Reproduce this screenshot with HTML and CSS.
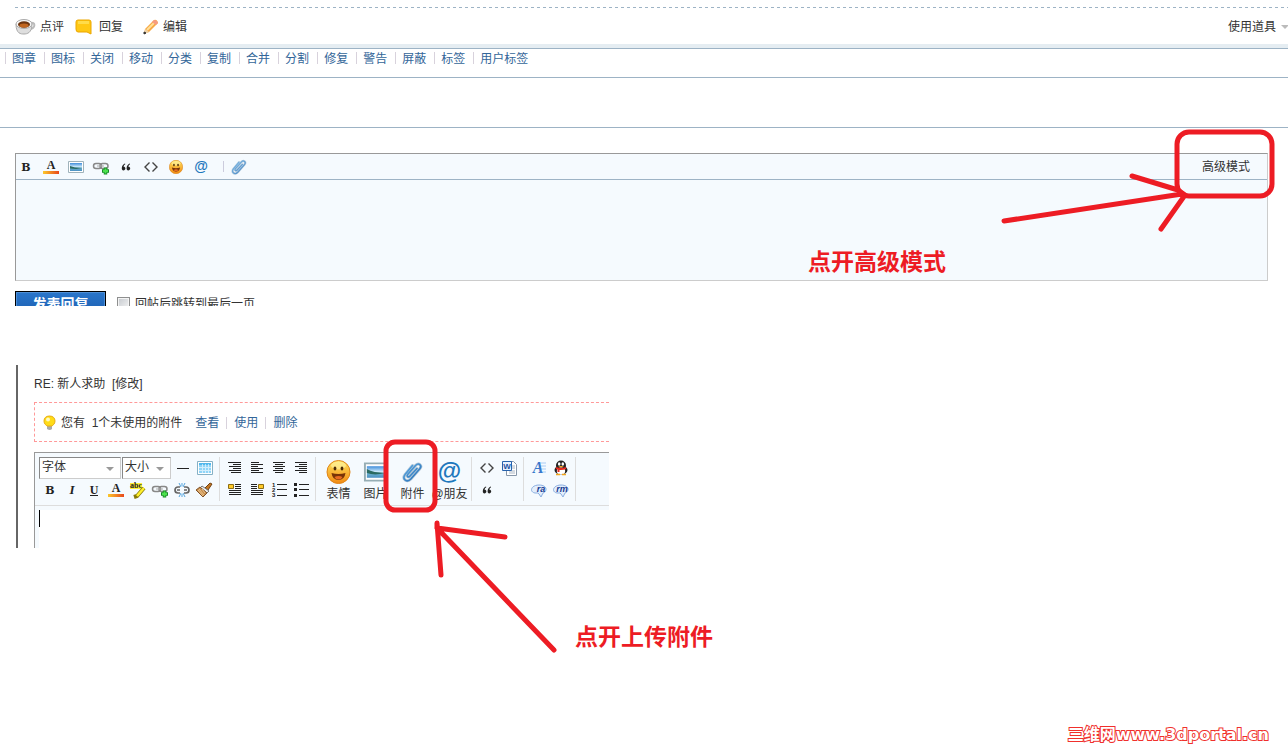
FILE: index.html
```
<!DOCTYPE html>
<html lang="zh-CN">
<head>
<meta charset="utf-8">
<title>新人求助</title>
<link rel="stylesheet" href="styles.css">
</head>
<body>
<svg class="paints" aria-hidden="true">
  <defs>
    <linearGradient id="gold" x1="0" y1="0" x2="0" y2="1"><stop offset="0" stop-color="#ffe45e"/><stop offset="1" stop-color="#f28a12"/></linearGradient>
    <linearGradient id="fire" x1="0" y1="0" x2="1" y2="0"><stop offset="0" stop-color="#fcc82c"/><stop offset="1" stop-color="#e8471c"/></linearGradient>
    <linearGradient id="sky" x1="0" y1="0" x2="0" y2="1"><stop offset="0" stop-color="#3f8ddb"/><stop offset=".5" stop-color="#d5effc"/><stop offset=".6" stop-color="#6fb3cf"/><stop offset="1" stop-color="#4a90c4"/></linearGradient>
    <linearGradient id="steel" x1="0" y1="0" x2="1" y2="1"><stop offset="0" stop-color="#62b1ea"/><stop offset="1" stop-color="#1c64ad"/></linearGradient>
  </defs>
</svg>
<svg class="sprite" aria-hidden="true">
  <symbol id="bold" viewBox="0 0 20 20"><text class="serif" x="10" y="14" font-size="11" text-anchor="middle">B</text></symbol>
  <symbol id="italic" viewBox="0 0 20 20"><text class="serif slant" x="10" y="14" font-size="13" text-anchor="middle">I</text></symbol>
  <symbol id="underline" viewBox="0 0 20 20"><text class="serif light" x="10" y="14" font-size="12" text-anchor="middle">U</text><path d="M6 15.500h8" stroke="#222"/></symbol>
  <symbol id="color" viewBox="0 0 20 20"><text class="serif light" x="10" y="12" font-size="12" text-anchor="middle">A</text><path fill="url(#fire)" d="M2 14h16v3H2z"/></symbol>
  <symbol id="image" viewBox="0 0 20 20"><path fill="#fff" stroke="#9fb2bb" d="M2.500 4.500h15v11h-15z"/><path fill="url(#sky)" d="M4 6h12v8H4z"/><path fill="#2a6a62" d="M4 9l5 1.500 7 .5-6 1-6-.5z"/></symbol>
  <symbol id="link" viewBox="0 0 20 20"><g fill="none" stroke="#888" stroke-width="1.500"><rect x="2.500" y="6.500" width="8" height="5" rx="2.500"/><rect x="9" y="6.500" width="8" height="5" rx="2.500"/></g><path d="M6 9h7" stroke="#aaa"/><path d="M14.500 10.500v7M11 14h7" stroke="#168a25" stroke-width="3.500"/><path d="M14.500 11.500v5M12 14h5" stroke="#4be14d" stroke-width="2"/></symbol>
  <symbol id="quote" viewBox="0 0 20 20"><path fill="#222" d="M9 6.500C6 7.500 5.500 11 6 12.500c.8 1.500 3.400 1 3.400-.9 0-1.200-.8-1.800-1.800-1.800.1-1 .6-1.900 1.700-2.500zM13.800 6.500c-3 1-3.500 4.500-3 6 .8 1.500 3.400 1 3.400-.9 0-1.200-.8-1.800-1.800-1.800.1-1 .6-1.900 1.700-2.500z"/></symbol>
  <symbol id="code" viewBox="0 0 20 20"><path d="M8.500 5.500L4 10l4.500 4.500M11.500 5.500L16 10l-4.500 4.500" fill="none" stroke="#444" stroke-width="1.400"/></symbol>
  <symbol id="smile" viewBox="0 0 24 24"><circle cx="12" cy="12" r="11.500" fill="url(#gold)" stroke="#df8518"/><ellipse cx="12" cy="5.500" rx="7.500" ry="4" fill="#fff4a3" opacity=".65"/><ellipse cx="8.500" cy="8.500" rx="1.400" ry="2" fill="#4d2c06"/><ellipse cx="15.500" cy="8.500" rx="1.400" ry="2" fill="#4d2c06"/><path d="M5 13q7 2 14 0-1 7-7 7t-7-7z" fill="#793307"/><path d="M8 17q4-2 8 0-1 2.500-4 2.500T8 17z" fill="#e86b22"/></symbol>
  <symbol id="at" viewBox="0 0 24 24"><text class="at" x="12" y="19" font-size="24" text-anchor="middle">@</text></symbol>
  <symbol id="clip" viewBox="0 0 24 24"><g fill="none" stroke-linecap="round" stroke-linejoin="round"><path d="M16.500 8.500L9.500 16c-1.800 2-3.800.2-2.200-1.800L15 5.500c3.200-3.400 7 0 4.300 3.300l-9 10.200c-3.800 4-9 .2-5.800-4.400L12 5.500" stroke="#b4c8d8" stroke-width="3"/><path d="M16.500 8.500L9.500 16c-1.800 2-3.800.2-2.200-1.800L15 5.500c3.200-3.400 7 0 4.300 3.300l-9 10.200c-3.800 4-9 .2-5.800-4.400L12 5.500" stroke="url(#steel)" stroke-width="1.600"/></g></symbol>
  <symbol id="rule" viewBox="0 0 20 20"><path d="M4 10.500h12" stroke="#222"/></symbol>
  <symbol id="table" viewBox="0 0 20 20"><path fill="#fff" stroke="#86b1c5" d="M2.500 3.500h15v13h-15z"/><path fill="#51b8ed" d="M4 5h12v2H4z"/><path fill="#8fd5f8" d="M4 7h12v8H4z"/><path d="M7.500 6v9M10.500 6v9M13.500 6v9M4 9.500h12M4 12.500h12" stroke="#fff" opacity=".6"/></symbol>
  <symbol id="marker" viewBox="0 0 20 20"><path fill="#ffef36" d="M2 3h12v6H2z"/><text class="abc" x="2" y="8" font-size="8">abc</text><path d="M16 8l-7 8-3 1" fill="none" stroke="#877a09" stroke-width="4"/><path d="M16 8l-7 8" stroke="#fff02d" stroke-width="2.500"/></symbol>
  <symbol id="unlink" viewBox="0 0 20 20"><path d="M8 7H6a3 3 0 0 0 0 6h2M12 7h2a3 3 0 0 1 0 6h-2M5 10h3M12 10h3" fill="none" stroke="#666" stroke-width="1.700"/><path d="M7 3l2 4M13 3l-2 4M10 3v3M7 17l2-4M13 17l-2-4M10 17v-3" stroke="#55a5df"/></symbol>
  <symbol id="brush" viewBox="0 0 20 20"><path d="M11 8l5-5 2 1-4 6z" fill="#c47723" stroke="#704111"/><path d="M8 6l7 5-2 2-7-5z" fill="#eee" stroke="#777"/><path d="M6 7l7 6-4 4-7-7z" fill="#c68e50" stroke="#815328"/><path d="M5 9l5 6M4 10l5 6M8 9l3 4" stroke="#edc68e"/></symbol>
  <symbol id="para" viewBox="0 0 20 20"><path d="M3 4.500h13M8 6.500h8M4 8.500h12M8 10.500h8M4 12.500h12M6 14.500h10" stroke="#222"/></symbol>
  <symbol id="left" viewBox="0 0 20 20"><path d="M4 4.500h8M4 6.500h12M4 8.500h7M4 10.500h12M4 12.500h8M4 14.500h12" stroke="#222"/></symbol>
  <symbol id="center" viewBox="0 0 20 20"><path d="M4 4.500h12M6 6.500h8M4 8.500h12M6 10.500h8M4 12.500h12M6 14.500h8" stroke="#222"/></symbol>
  <symbol id="right" viewBox="0 0 20 20"><path d="M4 4.500h12M8 6.500h8M4 8.500h12M8 10.500h8M4 12.500h12M8 14.500h8" stroke="#222"/></symbol>
  <symbol id="floatleft" viewBox="0 0 20 20"><path d="M10 4.500h6M10 6.500h6M10 8.500h6M4 10.500h12M4 12.500h12M4 14.500h12" stroke="#222"/><path fill="#ffca28" stroke="#8b6d14" d="M3.500 4.500h5v4h-5z"/></symbol>
  <symbol id="floatright" viewBox="0 0 20 20"><path d="M4 4.500h6M4 6.500h6M4 8.500h6M4 10.500h12M4 12.500h12M4 14.500h12" stroke="#222"/><path fill="#ffca28" stroke="#8b6d14" d="M11.500 4.500h5v4h-5z"/></symbol>
  <symbol id="numbers" viewBox="0 0 20 20"><path d="M8 4.500h10M8 9.500h10M8 15.500h10" stroke="#222"/><g font-family="Liberation Sans" font-size="6" font-weight="bold" fill="#222"><text x="3" y="7">1</text><text x="3" y="12">2</text><text x="3" y="17">3</text></g></symbol>
  <symbol id="bullets" viewBox="0 0 20 20"><path d="M8 4.500h10M8 9.500h10M8 15.500h10" stroke="#222"/><path fill="#222" d="M3 3h3v3H3zM3 8h3v3H3zM3 14h3v3H3z"/></symbol>
  <symbol id="picture" viewBox="0 0 26 24"><path fill="#fff" stroke="#96adb4" stroke-width="2" d="M2 3h23v18H2z"/><path fill="url(#sky)" d="M4 6h19v12H4z"/><path fill="#2a6a62" d="M4 9q7 4 19 4-11 3-19 0z"/></symbol>
  <symbol id="word" viewBox="0 0 20 20"><path d="M7.500 3.500h7l3 3v11h-10z" fill="#fff" stroke="#8797aa"/><path d="M12 8h4M12 10h4M10 13h6M10 15h6" stroke="#aab5c3"/><path fill="#e7f1ff" stroke="#2862ac" d="M3.500 3.500h9v9h-9z"/><text x="8" y="11" text-anchor="middle" font-family="Liberation Sans" font-size="8" font-weight="bold" fill="#1d52a2">W</text></symbol>
  <symbol id="styled" viewBox="0 0 20 20"><path d="M11 5h6M11 8h6M11 11h6M11 14h6" stroke="#a8ccf6"/><text class="serif blue slant" x="9" y="15" font-size="16" text-anchor="middle">A</text></symbol>
  <symbol id="penguin" viewBox="0 0 20 20"><ellipse cx="10" cy="12" rx="6.500" ry="4.500" fill="#222"/><ellipse cx="10" cy="7.500" rx="5" ry="5" fill="#222"/><ellipse cx="10" cy="13" rx="4.200" ry="3.500" fill="#fff"/><ellipse cx="8.200" cy="6" rx="1.300" ry="1.800" fill="#fff"/><ellipse cx="11.800" cy="6" rx="1.300" ry="1.800" fill="#fff"/><path d="M7 8h6l-3 1.500z" fill="#f6a51d"/><path d="M5 10q5 2 10 0M7.500 11v3" fill="none" stroke="#e52a1e" stroke-width="2"/><path d="M5 16.500h4M11 16.500h4" stroke="#f3a51b" stroke-width="1.500"/></symbol>
  <symbol id="ra" viewBox="0 0 20 20"><path d="M10 14l2 3 2-4c5-2 4-8-4-8S0 12 6 13h3z" fill="#e3eefb" stroke="#8aaee0"/><text class="media" x="12" y="12" font-size="9" text-anchor="middle">ra</text></symbol>
  <symbol id="rm" viewBox="0 0 20 20"><path d="M10 14l2 3 2-4c5-2 4-8-4-8S0 12 6 13h3z" fill="#e3eefb" stroke="#8aaee0"/><text class="media" x="11" y="12" font-size="9" text-anchor="middle">rm</text></symbol>
</svg>

<section class="post">
  <div class="actions">
    <a href="#" class="coffee"><svg width="21" height="18" viewBox="0 0 21 18"><path d="M15 5c6-2 6 6-1 6" fill="none" stroke="#bbb" stroke-width="2"/><path d="M1 6c0 10 5 10 8 10s8-1 8-10z" fill="#dedede" stroke="#aaa"/><ellipse cx="9" cy="6" rx="8" ry="4.500" fill="#f7f7f7" stroke="#aaa"/><ellipse cx="9" cy="6.500" rx="6" ry="3.300" fill="#6c3510"/><ellipse cx="9" cy="7.500" rx="4.500" ry="2" fill="#c0651f"/></svg>点评</a>
    <a href="#" class="answer"><svg width="17" height="16" viewBox="0 0 17 16"><path d="M3 1h11q2 0 2 2v12l-4-2H3q-2 0-2-3V3q0-2 2-2z" fill="#ffc814" stroke="#eba600"/><path d="M3 2h11v3H3z" fill="#ffdc4a"/></svg>回复</a>
    <a href="#" class="edit"><svg width="16" height="16" viewBox="0 0 16 16"><path d="M1 15l1-5 9-9q3-1 4 3l-9 9z" fill="#f8a844"/><path d="M4 11l8-8" stroke="#ffe19a" stroke-width="2"/><path d="M11 1q3 0 4 3l-2 2-4-3z" fill="#f69b83"/><path d="M2 10l4 3-5 2z" fill="#ecd2aa"/><path d="M1 13l2 1-2 1z" fill="#333" stroke="#333"/></svg>编辑</a>
    <a href="#" class="tools">使用道具</a>
  </div>
</section>
<nav class="manage">
  <a href="#">图章</a><a href="#">图标</a><a href="#">关闭</a><a href="#">移动</a><a href="#">分类</a><a href="#">复制</a><a href="#">合并</a><a href="#">分割</a><a href="#">修复</a><a href="#">警告</a><a href="#">屏蔽</a><a href="#">标签</a><a href="#">用户标签</a>
</nav>
<div class="spacer"></div>

<section class="quick">
  <form>
    <div class="box">
      <div class="bar">
        <button type="button" aria-label="粗体"><svg><use href="#bold"/></svg></button>
        <button type="button" aria-label="颜色"><svg><use href="#color"/></svg></button>
        <button type="button" aria-label="图片"><svg><use href="#image"/></svg></button>
        <button type="button" aria-label="链接"><svg><use href="#link"/></svg></button>
        <button type="button" aria-label="引用"><svg><use href="#quote"/></svg></button>
        <button type="button" aria-label="代码"><svg><use href="#code"/></svg></button>
        <button type="button" aria-label="表情"><svg class="small"><use href="#smile"/></svg></button>
        <button type="button" aria-label="@朋友"><svg class="small"><use href="#at"/></svg></button>
        <span class="divider"></span>
        <button type="button" aria-label="附件"><svg class="medium"><use href="#clip"/></svg></button>
        <a href="#" class="advanced">高级模式</a>
      </div>
      <textarea aria-label="回复内容"></textarea>
    </div>
    <div class="submit">
      <button type="submit">发表回复</button>
      <input type="checkbox" id="jump"><label for="jump">回帖后跳转到最后一页</label>
    </div>
  </form>
  <svg class="mark mark-advanced" viewBox="0 0 290 120"><rect x="179" y="12" width="95" height="64" rx="12"/><path d="M6 101L184 74M134 56l46 14 7 5-24 34"/></svg>
  <p class="note note-advanced">点开高级模式</p>
</section>

<section class="full">
  <div class="panel">
    <h1>RE: 新人求助&nbsp; [修改]</h1>
    <div class="notice">
      <svg width="13" height="16" viewBox="0 0 13 16"><path d="M4 10h5v4q-2 2-5 0z" fill="#aaa"/><path d="M6.500 1C3 1 1 3 1 6s2 4 3 5h5c1-1 3-2 3-5s-2-5-5.500-5z" fill="#ffdc17" stroke="#e8ad16"/><circle cx="5" cy="4.500" r="2" fill="#fffac2"/></svg>
      <span>您有&nbsp; 1个未使用的附件</span>
      <nav><a href="#">查看</a><a href="#">使用</a><a href="#">删除</a></nav>
    </div>
    <div class="editor">
      <div class="tools-bar">
        <div class="group">
          <div class="row">
            <span class="pick family"><select aria-label="字体"><option>字体</option></select></span>
            <span class="pick size"><select aria-label="大小"><option>大小</option></select></span>
            <button type="button" aria-label="分隔线"><svg><use href="#rule"/></svg></button>
            <button type="button" aria-label="表格"><svg><use href="#table"/></svg></button>
          </div>
          <div class="row">
            <button type="button" aria-label="粗体"><svg><use href="#bold"/></svg></button>
            <button type="button" aria-label="斜体"><svg><use href="#italic"/></svg></button>
            <button type="button" aria-label="下划线"><svg><use href="#underline"/></svg></button>
            <button type="button" aria-label="颜色"><svg><use href="#color"/></svg></button>
            <button type="button" aria-label="背景色"><svg><use href="#marker"/></svg></button>
            <button type="button" aria-label="链接"><svg><use href="#link"/></svg></button>
            <button type="button" aria-label="移除链接"><svg><use href="#unlink"/></svg></button>
            <button type="button" aria-label="清除格式"><svg><use href="#brush"/></svg></button>
          </div>
        </div>
        <div class="group">
          <div class="row">
            <button type="button" aria-label="自动排版"><svg><use href="#para"/></svg></button>
            <button type="button" aria-label="居左"><svg><use href="#left"/></svg></button>
            <button type="button" aria-label="居中"><svg><use href="#center"/></svg></button>
            <button type="button" aria-label="居右"><svg><use href="#right"/></svg></button>
          </div>
          <div class="row">
            <button type="button" aria-label="左浮动"><svg><use href="#floatleft"/></svg></button>
            <button type="button" aria-label="右浮动"><svg><use href="#floatright"/></svg></button>
            <button type="button" aria-label="编号列表"><svg><use href="#numbers"/></svg></button>
            <button type="button" aria-label="项目列表"><svg><use href="#bullets"/></svg></button>
          </div>
        </div>
        <div class="group big">
          <button type="button"><svg><use href="#smile"/></svg>表情</button>
          <button type="button"><svg><use href="#picture"/></svg>图片</button>
          <button type="button"><svg><use href="#clip"/></svg>附件</button>
          <button type="button"><svg><use href="#at"/></svg>@朋友</button>
        </div>
        <div class="group">
          <div class="row">
            <button type="button" aria-label="代码"><svg><use href="#code"/></svg></button>
            <button type="button" aria-label="Word"><svg><use href="#word"/></svg></button>
          </div>
          <div class="row"><button type="button" aria-label="引用"><svg><use href="#quote"/></svg></button></div>
        </div>
        <div class="group">
          <div class="row">
            <button type="button" aria-label="艺术字"><svg><use href="#styled"/></svg></button>
            <button type="button" aria-label="QQ"><svg><use href="#penguin"/></svg></button>
          </div>
          <div class="row">
            <button type="button" aria-label="ra"><svg><use href="#ra"/></svg></button>
            <button type="button" aria-label="rm"><svg><use href="#rm"/></svg></button>
          </div>
        </div>
      </div>
      <div class="page" contenteditable="true" role="textbox" aria-label="正文"><span class="caret"></span></div>
    </div>
  </div>
  <svg class="mark mark-attach" viewBox="0 0 200 220"><rect x="16" y="6" width="49" height="68" rx="9"/><path d="M184 214L67 92M71 139l-4-52v5l68 9"/></svg>
  <p class="note note-attach">点开上传附件</p>
</section>
<footer>三维网www.3dportal.cn</footer>
</body>
</html>
```
FILE: styles.css
```
* { box-sizing: border-box; }
body {
  margin: 0;
  background: #fff;
  color: #333;
  font: 12px/18px "Liberation Sans", "Noto Sans CJK SC", sans-serif;
  overflow-x: hidden;
}
a { color: #336699; text-decoration: none; }
button, select, textarea { font: inherit; color: inherit; }
button { border: 0; padding: 0; background: none; }
svg { display: block; flex: none; }
.paints { position: absolute; width: 0; height: 0; }
.sprite { display: none; }

.serif { font-family: "DejaVu Serif", serif; font-weight: bold; fill: #222; }
.light { font-family: "Liberation Serif", serif; }
.slant { font-family: "Liberation Serif", serif; font-style: italic; }
.blue { fill: #3978cb; }
.at { font-family: "Liberation Sans", sans-serif; font-weight: bold; fill: #1e78bd; }
.abc { font-family: "Liberation Serif", serif; font-weight: bold; fill: #222; }
.media { font-family: "Liberation Sans", sans-serif; font-weight: bold; font-style: italic; fill: #173b91; }

.post { padding-top: 7px; border-bottom: 4px solid #e5edf2; }
.actions {
  display: flex;
  align-items: center;
  height: 37px;
  padding-top: 2px;
  margin-left: 15px;
  background: repeating-linear-gradient(90deg, #9db3c5 0 3px, transparent 3px 6px) top / 100% 1px no-repeat;
}
.actions a { display: flex; align-items: center; color: #333; }
.coffee { gap: 4px; margin-right: 11px; }
.answer { gap: 7px; margin-right: 20px; }
.edit { gap: 4px; }
.tools { gap: 5px; margin-left: auto; }
.tools::after {
  content: "";
  border: solid transparent;
  border-width: 4px 4px 0;
  border-top-color: #bbb;
  margin-right: -1px;
}
.manage {
  display: flex;
  flex-wrap: wrap;
  min-height: 30px;
  padding: 3px 5px;
  border: solid #9db3c5;
  border-width: 1px 0;
}
.manage a {
  height: 12px;
  line-height: 14px;
  padding: 0 8px 0 6px;
  border-left: 1px solid #d8d2dc;
}
.spacer { height: 50px; border-bottom: 1px solid #9db3c5; }

.quick { position: relative; padding: 25px 20px 0 15px; }
.box { border: 1px solid #ccc; border-top-color: #999; border-left-color: #999; background: #f5fafe; }
.bar {
  display: flex;
  align-items: center;
  gap: 5px;
  height: 26px;
  border-bottom: 1px solid #9db3c5;
}
.bar button { display: grid; place-items: center; width: 20px; height: 20px; }
.bar svg { width: 20px; height: 20px; }
.bar .small { width: 14px; height: 14px; }
.bar .medium { width: 18px; height: 18px; opacity: .8; }
.divider { width: 1px; height: 11px; margin-left: 7px; background: #ccd; }
.advanced { margin-left: auto; margin-right: 17px; color: #333; }
.quick textarea {
  display: block;
  width: 100%;
  height: 100px;
  border: 0;
  background: transparent;
  resize: none;
  outline: 0;
}
.submit { display: flex; height: 15px; margin-top: 10px; overflow: hidden; }
.submit button {
  flex: none;
  width: 91px;
  height: 26px;
  border: 1px solid #000;
  background: linear-gradient(#2a76cb, #1b5dae);
  box-shadow: inset 0 0 0 1px #4f8fd6;
  color: #fff;
  font-size: 14px;
  font-weight: bold;
}
.submit input {
  appearance: none;
  flex: none;
  width: 13px;
  height: 13px;
  margin: 6px 5px 0 11px;
  border: 1px solid #8e8f8f;
  background: linear-gradient(135deg, #c5c9ce, #f5f5f5);
  box-shadow: inset 0 0 0 1px #f4f4f4;
}
.submit label { height: 26px; line-height: 26px; }

.full { position: relative; padding: 59px 16px 0; }
.panel { max-width: 593px; border-left: 2px solid #666; padding: 10px 0 0 16px; }
h1 { margin: 0 0 9px; font-size: 12px; font-weight: normal; }
.notice {
  display: flex;
  align-items: center;
  height: 40px;
  padding: 1px 0 0 8px;
  border: 1px dashed #f99;
  border-right: 0;
}
.notice span { margin: 0 13px 0 5px; }
.notice nav { display: flex; }
.notice nav a { line-height: 12px; }
.notice nav a + a { margin-left: 7px; padding-left: 7px; border-left: 1px solid #d8d2dc; }
.editor { margin-top: 10px; border: solid #999; border-width: 1px 0 0 1px; background: #f5fafe; }
.tools-bar { display: flex; height: 53px; padding-top: 4px; border-bottom: 1px solid #ddd; }
.group { height: 44px; padding: 0 3px 0 4px; border-right: 1px solid #ddd; }
.row { display: flex; height: 22px; }
.row button { display: grid; place-items: center; width: 22px; height: 22px; }
.row svg { width: 20px; height: 20px; }
.pick { position: relative; height: 22px; margin-right: 1px; }
.pick::after {
  content: "";
  position: absolute;
  right: 7px;
  top: 10px;
  border: solid transparent;
  border-width: 4px 4px 0;
  border-top-color: #999;
  pointer-events: none;
}
.family { width: 82px; }
.size { width: 49px; }
.pick select {
  appearance: none;
  width: 100%;
  height: 100%;
  padding: 0 2px 2px;
  border: 1px solid #ccc;
  border-top-color: #888;
  border-left-color: #888;
  border-radius: 0;
  background: #fff;
}
.big { display: flex; }
.big button {
  display: flex;
  flex-direction: column;
  align-items: center;
  width: 37px;
  padding-top: 3px;
  line-height: 20px;
  white-space: nowrap;
}
.big svg { width: 25px; height: 24px; }
.page { height: 38px; margin: 4px 0 0 4px; background: #fff; outline: 0; }
.caret { display: block; width: 1px; height: 17px; background: #000; }

.mark { position: absolute; fill: none; stroke: #ed1c24; stroke-width: 5; stroke-linecap: round; stroke-linejoin: round; pointer-events: none; }
.mark-advanced { top: -8px; right: 0; width: 290px; height: 120px; }
.mark-attach { top: 130px; left: 370px; width: 200px; height: 220px; }
.note { position: absolute; margin: 0; color: #ed1c24; font-size: 23px; line-height: 30px; font-weight: bold; white-space: nowrap; }
.note-advanced { top: 119px; right: 342px; }
.note-attach { top: 316px; left: 575px; }

footer {
  margin-top: 177px;
  padding-right: 19px;
  text-align: right;
  font: bold 16px/20px "DejaVu Sans", "Noto Sans CJK SC", sans-serif;
  color: #fff;
  -webkit-text-stroke: 2px #f0302c;
  paint-order: stroke fill;
}
```
